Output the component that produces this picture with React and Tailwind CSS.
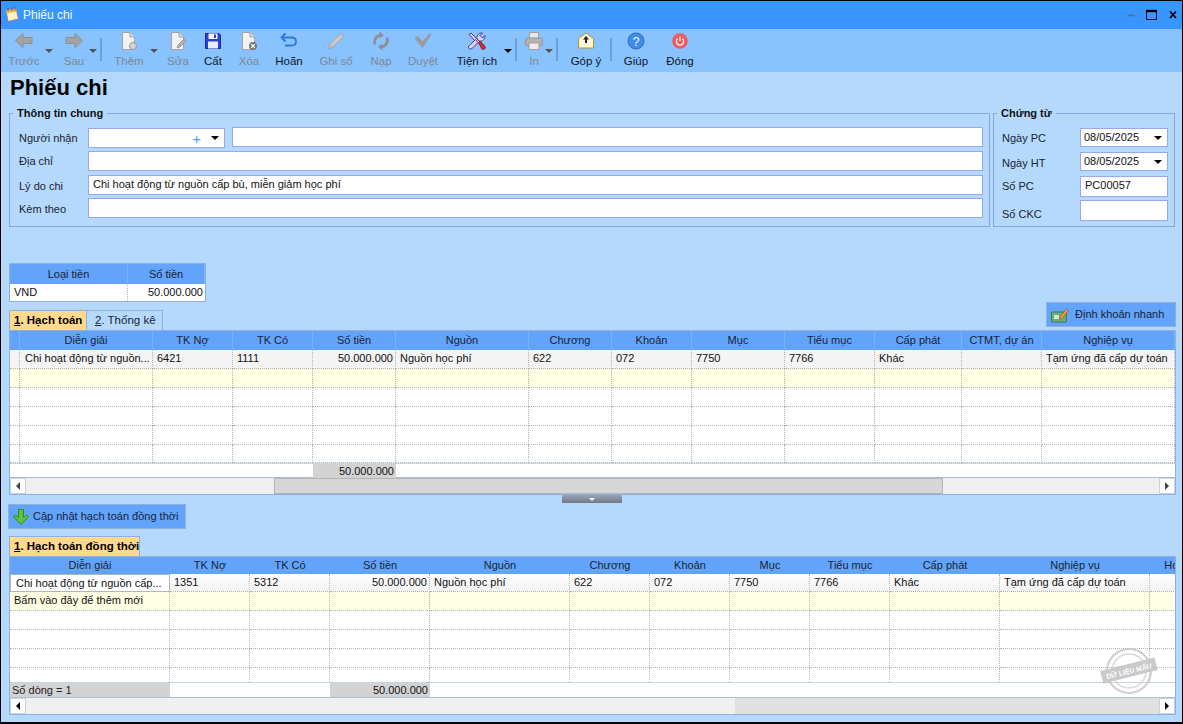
import React from 'react';

const Doc = ({ children }) => (
  <svg width="20" height="20" viewBox="0 0 20 20">
    <path d="M3.5 1.5H11L15.5 6V18.5H3.5Z" fill="#f2f2f2" stroke="#a3a3a3" />
    <path d="M11 1.5V6H15.5" fill="#d8d8d8" stroke="#a3a3a3" />
    {children}
  </svg>
);

const icons = {
  back: (
    <svg width="20" height="20" viewBox="0 0 20 20">
      <path d="M1.5 9.5L9 2.5V6.5H18V12.5H9V16.5Z" fill="#a3a3a3" stroke="#8e8e8e" />
    </svg>
  ),
  next: (
    <svg width="20" height="20" viewBox="0 0 20 20">
      <path d="M18.5 9.5L11 2.5V6.5H2V12.5H11V16.5Z" fill="#a3a3a3" stroke="#8e8e8e" />
    </svg>
  ),
  add: (
    <Doc>
      <circle cx="14" cy="15" r="3.5" fill="#d4d4d4" stroke="#9a9a9a" />
    </Doc>
  ),
  edit: (
    <Doc>
      <path d="M9 17L10 14L16 8L18 10L12 16Z" fill="#b0b0b0" stroke="#8f8f8f" strokeWidth="0.7" />
    </Doc>
  ),
  save: (
    <svg width="20" height="20" viewBox="0 0 20 20">
      <path d="M2.5 2.5H16L17.5 4V17.5H2.5Z" fill="#2f3fd8" stroke="#1c2a9c" />
      <rect x="5.5" y="2.5" width="9" height="5.5" fill="#f4f6ff" />
      <rect x="11" y="3.5" width="2" height="3.5" fill="#2f3fd8" />
      <rect x="5" y="10.5" width="10" height="7" fill="#e8ecff" />
    </svg>
  ),
  del: (
    <Doc>
      <circle cx="14" cy="15" r="4" fill="#777" />
      <path d="M12.2 13.2L15.8 16.8M15.8 13.2L12.2 16.8" stroke="#fff" strokeWidth="1.2" />
    </Doc>
  ),
  undo: (
    <svg width="20" height="20" viewBox="0 0 20 20" fill="none">
      <path d="M6.5 2.5L2.5 6.5L6.5 10.5" stroke="#2a78d8" strokeWidth="1.8" />
      <path d="M3 6.5H12.5C15.5 6.5 17 8.5 17 10.5C17 12.5 15.5 14.5 12.5 14.5H6" stroke="#2a78d8" strokeWidth="1.8" />
    </svg>
  ),
  pencil: (
    <svg width="20" height="20" viewBox="0 0 20 20">
      <path d="M2.5 18L4 13L14.5 2.5L17.5 5.5L7 16Z" fill="#c9c9c9" stroke="#a2a2a2" />
    </svg>
  ),
  reload: (
    <svg width="20" height="20" viewBox="0 0 20 20" fill="none">
      <path d="M4 13.5C2.5 9.5 4.5 5 9.5 4" stroke="#8f8f8f" strokeWidth="2.8" />
      <path d="M16 6.5C17.5 10.5 15.5 15 10.5 16" stroke="#8f8f8f" strokeWidth="2.8" />
      <path d="M8.5 0.5L13 4L8.5 7.5Z" fill="#8f8f8f" />
      <path d="M11.5 12.5L7 16L11.5 19.5Z" fill="#8f8f8f" />
    </svg>
  ),
  check: (
    <svg width="20" height="20" viewBox="0 0 20 20">
      <path d="M1.5 7L5 5L9.5 10.5L17 2L18.5 3.5L9.5 17Z" fill="#9a9a9a" />
    </svg>
  ),
  tools: (
    <svg width="20" height="20" viewBox="0 0 20 20">
      <path d="M2 3.5L4 2L12.5 10.5L10.5 12.5Z" fill="#d9d3ee" stroke="#4f3a8a" />
      <path d="M11.5 9.5L10 7.5C9.5 4.5 12 1.5 15.5 2L13 4.5L15.5 7L18 4.5C18.5 8 15.5 10.5 12.5 10Z" fill="#d9d3ee" stroke="#4f3a8a" />
      <path d="M8.5 8.5L3.5 13.5C1.5 15 1 16.5 2 17.5C3 18.5 4.5 18 6 16.5L11 11.5Z" fill="#d9d3ee" stroke="#4f3a8a" />
      <path d="M11.5 11.5L13 10L18 15.5C18.5 16.5 18.5 17 17.5 18C16.5 18.8 16 18.5 15 18Z" fill="#d83030" stroke="#8a1c1c" />
    </svg>
  ),
  print: (
    <svg width="20" height="20" viewBox="0 0 20 20">
      <rect x="5.5" y="1.5" width="9" height="6" fill="#e8e8e8" stroke="#a0a0a0" />
      <rect x="1.5" y="7" width="17" height="7.5" rx="1.5" fill="#b3b3b3" stroke="#969696" />
      <rect x="5" y="12" width="10" height="6.5" fill="#ececec" stroke="#a0a0a0" />
    </svg>
  ),
  mail: (
    <svg width="20" height="20" viewBox="0 0 20 20">
      <path d="M2.5 7.5L10 2L17.5 7.5V17H2.5Z" fill="#fff6d8" stroke="#b8902c" />
      <path d="M10 5L13 8.5H11V12H9V8.5H7Z" fill="#222" />
    </svg>
  ),
  help: (
    <svg width="20" height="20" viewBox="0 0 20 20">
      <circle cx="10" cy="10" r="8" fill="#3f8de8" stroke="#2a6cc4" />
      <text x="10" y="14.5" textAnchor="middle" fontSize="12" fill="#fff" fontFamily="Liberation Sans">?</text>
    </svg>
  ),
  power: (
    <svg width="20" height="20" viewBox="0 0 20 20" fill="none">
      <circle cx="10" cy="10" r="7.8" fill="#f05c5c" />
      <path d="M7.6 7.8A3.6 3.6 0 1 0 12.4 7.8" stroke="#fff" strokeWidth="1.2" />
      <path d="M10 5.8V10" stroke="#fff" strokeWidth="1.2" />
    </svg>
  ),
};

function ToolBtn({ label, icon, off, className }) {
  return (
    <div className={`flex flex-col items-center shrink-0 ${className}`}>
      <div className="h-[20px] flex items-center justify-center">{icons[icon]}</div>
      <div className={`mt-[3px] text-[11.5px] leading-[15px] whitespace-nowrap ${off ? 'text-[#7f8790]' : 'text-[#10161c]'}`}>{label}</div>
    </div>
  );
}

function Caret({ off, className }) {
  return (
    <div className={`w-[8px] shrink-0 self-start mt-[18px] flex justify-center ${className}`}>
      <div className={`w-0 h-0 border-x-[4px] border-x-transparent border-t-[4px] ${off ? 'border-t-[#555]' : 'border-t-black'}`} />
    </div>
  );
}

const Sep = ({ className }) => <div className={`w-[2px] h-[23px] self-start mt-[7px] bg-[#6f9ed6] shrink-0 ${className}`} />;

function Toolbar() {
  return (
    <div className="h-[43px] bg-[#88c2ff] flex items-start pl-[7px] pt-[2px]">
      <ToolBtn label="Trước" icon="back" off className="w-[32px]" />
      <Caret off className="ml-[5px]" />
      <ToolBtn label="Sau" icon="next" off className="w-[28px] ml-[7px]" />
      <Caret off className="ml-[1px]" />
      <Sep className="ml-[3px]" />
      <ToolBtn label="Thêm" icon="add" off className="w-[34px] ml-[10px]" />
      <Caret off className="ml-[4px]" />
      <ToolBtn label="Sửa" icon="edit" off className="w-[28px] ml-[6px]" />
      <ToolBtn label="Cất" icon="save" className="w-[28px] ml-[7px]" />
      <ToolBtn label="Xóa" icon="del" off className="w-[28px] ml-[8px]" />
      <ToolBtn label="Hoãn" icon="undo" className="w-[36px] ml-[8px]" />
      <ToolBtn label="Ghi sổ" icon="pencil" off className="w-[40px] ml-[9px]" />
      <ToolBtn label="Nạp" icon="reload" off className="w-[30px] ml-[10px]" />
      <ToolBtn label="Duyệt" icon="check" off className="w-[36px] ml-[9px]" />
      <ToolBtn label="Tiện ích" icon="tools" className="w-[44px] ml-[14px]" />
      <Caret className="ml-[5px]" />
      <Sep className="ml-[3px]" />
      <ToolBtn label="In" icon="print" off className="w-[20px] ml-[7px]" />
      <Caret off className="ml-[1px]" />
      <Sep className="ml-[3px]" />
      <ToolBtn label="Góp ý" icon="mail" className="w-[36px] ml-[10px]" />
      <Sep className="ml-[6px]" />
      <ToolBtn label="Giúp" icon="help" className="w-[30px] ml-[9px]" />
      <ToolBtn label="Đóng" icon="power" className="w-[34px] ml-[12px]" />
    </div>
  );
}

function Input({ value, className }) {
  return (
    <div className={`border border-[#98a8ea] bg-white px-[4px] text-[11px] leading-[17px] text-[#111] whitespace-nowrap overflow-hidden ${className}`}>
      {value}
    </div>
  );
}

function DateBox({ value, className }) {
  return (
    <div className={`h-[19px] flex items-center justify-between border border-[#98a8ea] bg-white pl-[3px] pr-[5px] text-[11px] text-[#111] ${className}`}>
      {value}
      <div className="w-0 h-0 border-x-[4px] border-x-transparent border-t-[4px] border-t-black" />
    </div>
  );
}

const Label = ({ children, className }) => (
  <div className={`text-[11px] leading-[15px] text-[#1a2430] whitespace-nowrap ${className}`}>{children}</div>
);

function Group({ title, className, children }) {
  return (
    <fieldset className={`border border-[#88a4d8] pb-0 h-[121px] ${className}`}>
      <legend className="ml-[3px] px-[4px] text-[11px] leading-[14px] font-bold text-[#111]">{title}</legend>
      {children}
    </fieldset>
  );
}

function InfoGroups() {
  return (
    <div className="flex">
      <Group title="Thông tin chung" className="w-[981px]">
        <div className="pt-[7px] pl-[9px] pr-[6px] flex flex-col">
          <div className="flex items-start h-[24px]">
            <Label className="w-[69px] mt-[4px]">Người nhận</Label>
            <div className="w-[137px] h-[20px] mt-[1px] flex items-center justify-between border border-[#98a8ea] bg-white pr-[5px]">
              <span className="ml-auto mr-[10px] text-[15px] leading-[15px] text-[#5aa0e0]">+</span>
              <div className="w-0 h-0 border-x-[4px] border-x-transparent border-t-[4px] border-t-black" />
            </div>
            <Input className="flex-1 h-[20px] ml-[7px]" />
          </div>
          <div className="flex items-start h-[24px]">
            <Label className="w-[69px] mt-[3px]">Địa chỉ</Label>
            <Input className="flex-1 h-[20px]" />
          </div>
          <div className="flex items-start h-[23px]">
            <Label className="w-[69px] mt-[4px]">Lý do chi</Label>
            <Input value="Chi hoạt động từ nguồn cấp bù, miễn giảm học phí" className="flex-1 h-[20px]" />
          </div>
          <div className="flex items-start">
            <Label className="w-[69px] mt-[4px]">Kèm theo</Label>
            <Input className="flex-1 h-[20px]" />
          </div>
        </div>
      </Group>
      <Group title="Chứng từ" className="w-[182px] ml-[3px]">
        <div className="pt-[8px] pl-[8px] flex flex-col">
          <div className="flex items-start h-[24px]">
            <Label className="w-[78px] mt-[3px]">Ngày PC</Label>
            <DateBox value="08/05/2025" className="w-[88px]" />
          </div>
          <div className="flex items-start h-[24px]">
            <Label className="w-[78px] mt-[4px]">Ngày HT</Label>
            <DateBox value="08/05/2025" className="w-[88px]" />
          </div>
          <div className="flex items-start h-[24px]">
            <Label className="w-[78px] mt-[3px]">Số PC</Label>
            <Input value="PC00057" className="w-[88px] h-[21px]" />
          </div>
          <div className="flex items-start">
            <Label className="w-[78px] mt-[7px]">Số CKC</Label>
            <Input className="w-[88px] h-[21px]" />
          </div>
        </div>
      </Group>
    </div>
  );
}

const Dotted = 'border-r border-b border-dotted border-[#b4b4b4]';

function Cell({ value, right, className = '' }) {
  return (
    <div className={`pl-[4px] pr-[2px] text-[11px] leading-[17px] text-[#111] whitespace-nowrap overflow-hidden ${right ? 'text-right' : ''} ${Dotted} ${className}`}>
      {value}
    </div>
  );
}

function HeadCell({ value, className = '' }) {
  return (
    <div className={`text-center text-[11px] text-[#1a2430] whitespace-nowrap border-r border-[#7fb2f8] ${className}`}>{value}</div>
  );
}

function CurrencyTable() {
  return (
    <div className="w-[197px] border border-[#8fb0de] bg-white">
      <div className="grid grid-cols-[118px_77px] h-[20px] bg-[#62a3fb] leading-[20px]">
        <HeadCell value="Loại tiền" />
        <HeadCell value="Số tiền" />
      </div>
      <div className="grid grid-cols-[118px_77px] h-[17px]">
        <Cell value="VND" className="border-b-0" />
        <Cell value="50.000.000" right className="border-b-0 border-r-0 pr-0" />
      </div>
    </div>
  );
}

const col1 = 'grid grid-cols-[10px_133px_80px_80px_83px_133px_83px_80px_93px_90px_87px_80px_133px]';
const col2 = 'grid grid-cols-[160px_80px_80px_100px_140px_80px_80px_80px_80px_110px_150px_50px]';

const head1 = ['', 'Diễn giải', 'TK Nợ', 'TK Có', 'Số tiền', 'Nguồn', 'Chương', 'Khoản', 'Mục', 'Tiểu mục', 'Cấp phát', 'CTMT, dự án', 'Nghiệp vụ'];
const row1 = ['', 'Chi hoạt động từ nguồn...', '6421', '1111', '50.000.000', 'Nguồn học phí', '622', '072', '7750', '7766', 'Khác', '', 'Tạm ứng đã cấp dự toán'];
const head2 = ['Diễn giải', 'TK Nợ', 'TK Có', 'Số tiền', 'Nguồn', 'Chương', 'Khoản', 'Mục', 'Tiểu mục', 'Cấp phát', 'Nghiệp vụ', 'Hợp'];
const row2 = ['Chi hoạt động từ nguồn cấp...', '1351', '5312', '50.000.000', 'Nguồn học phí', '622', '072', '7750', '7766', 'Khác', 'Tạm ứng đã cấp dự toán', ''];

function ScrollBar({ children }) {
  return (
    <div className="h-[17px] flex bg-[#efefef] border-t border-[#aebfd4]">
      <div className="w-[16px] bg-white border border-[#c6d2e0] flex items-center justify-center shrink-0">
        <div className="w-0 h-0 border-y-[4px] border-y-transparent border-r-[4px] border-r-[#444]" />
      </div>
      <div className="flex-1 flex">{children}</div>
      <div className="w-[16px] bg-white border border-[#c6d2e0] flex items-center justify-center shrink-0">
        <div className="w-0 h-0 border-y-[4px] border-y-transparent border-l-[4px] border-l-[#444]" />
      </div>
    </div>
  );
}

function Tab({ num, label, active, className = '' }) {
  return (
    <div className={`h-[20px] flex items-center text-[11.5px] border border-b-0 border-[#8fb0de] whitespace-nowrap ${active ? 'bg-[#ffd98c] font-bold text-black' : 'bg-[#b5d9fd] text-[#1a2430]'} ${className}`}>
      <span className="underline">{num}</span>. {label}
    </div>
  );
}

function GridOne() {
  const blanks = [19, 19, 19, 19, 18];
  return (
    <div className="border border-[#8fb0de] bg-white overflow-hidden">
      <div className={`${col1} h-[19px] leading-[19px] bg-[#62a3fb]`}>
        {head1.map((h, i) => <HeadCell key={i} value={h} />)}
      </div>
      <div className={`${col1} h-[19px] bg-[#f4f4f4]`}>
        {row1.map((v, i) => <Cell key={i} value={v} right={i === 4} className={i === 1 ? 'pl-[5px]' : ''} />)}
      </div>
      {blanks.map((h, r) => (
        <div key={r} className={`${col1} ${r === 0 ? 'h-[19px] bg-[#ffffe4]' : r === 4 ? 'h-[18px] bg-white' : 'h-[19px] bg-white'}`}>
          {head1.map((_, i) => <Cell key={i} />)}
        </div>
      ))}
      <div className={`${col1} h-[14px] bg-white border-t border-[#c4d4e4]`}>
        <div className="col-span-4" />
        <div className="bg-[#d3d3d3] text-right text-[11px] leading-[14px] pr-[2px] text-[#111]">50.000.000</div>
      </div>
      <ScrollBar>
        <div className="w-[248px]" />
        <div className="w-[669px] bg-[#d6d6d6] border border-[#b4b4b4]" />
      </ScrollBar>
    </div>
  );
}

function GridTwo() {
  return (
    <div className="relative border border-[#8fb0de] bg-white overflow-hidden">
      <div className={`${col2} h-[17px] leading-[17px] bg-[#62a3fb]`}>
        {head2.map((h, i) => <HeadCell key={i} value={h} className="border-r-0" />)}
      </div>
      <div className={`${col2} h-[18px] bg-gradient-to-b from-white to-[#f2f2f2]`}>
        {row2.map((v, i) => (
          <Cell key={i} value={v} right={i === 3} className={i === 0 ? 'bg-white border border-solid border-[#a8a8a8] pl-[5px]' : ''} />
        ))}
      </div>
      <div className={`${col2} h-[19px] bg-[#ffffe4]`}>
        <Cell value="Bấm vào đây để thêm mới" className="pl-[2px]" />
        {head2.slice(1).map((_, i) => <Cell key={i} />)}
      </div>
      <div className={`${col2} h-[19px]`}>{head2.map((_, i) => <Cell key={i} />)}</div>
      <div className={`${col2} h-[19px]`}>{head2.map((_, i) => <Cell key={i} />)}</div>
      <div className={`${col2} h-[19px]`}>{head2.map((_, i) => <Cell key={i} />)}</div>
      <div className={`${col2} h-[14px]`}>{head2.map((_, i) => <Cell key={i} className="border-b-0" />)}</div>
      <div className={`${col2} h-[15px] border-t border-[#c4d4e4]`}>
        <div className="bg-[#d3d3d3] text-[11px] leading-[14px] pl-[2px] text-[#222]">Số dòng = 1</div>
        <div className="col-span-2" />
        <div className="bg-[#d3d3d3] text-right text-[11px] leading-[14px] pr-[2px] text-[#111]">50.000.000</div>
      </div>
      <div className="h-[17px] flex border-t border-[#aebfd4] bg-[#e0e0e0]">
        <div className="w-[16px] bg-white border border-[#c6d2e0] flex items-center justify-center shrink-0">
          <div className="w-0 h-0 border-y-[4px] border-y-transparent border-r-[4px] border-r-black" />
        </div>
        <div className="w-[709px] bg-[#f0f0f0]" />
        <div className="flex-1" />
        <div className="w-[16px] bg-white border border-[#c6d2e0] flex items-center justify-center shrink-0">
          <div className="w-0 h-0 border-y-[4px] border-y-transparent border-l-[4px] border-l-black" />
        </div>
      </div>
      {/* con dấu dữ liệu mẫu */}
      <svg className="absolute right-[16px] bottom-[18px] opacity-80" width="60" height="50" viewBox="0 0 60 50">
        <circle cx="30" cy="25" r="22" fill="none" stroke="#c4c4c4" strokeWidth="2" />
        <circle cx="30" cy="25" r="17" fill="none" stroke="#d0d0d0" strokeWidth="1.5" />
        <g transform="rotate(-14 30 25)">
          <rect x="2" y="18" width="56" height="13" fill="#bdbdbd" />
          <text x="30" y="27.5" textAnchor="middle" fontSize="7" fontWeight="700" fill="#fff" fontFamily="Liberation Sans">DỮ LIỆU MẪU</text>
        </g>
      </svg>
    </div>
  );
}

export default function App() {
  return (
    <div className="w-[1183px] h-[724px] overflow-hidden flex flex-col bg-[#b5d9fd] border border-b-2 border-black font-['Liberation_Sans',sans-serif]">
      {/* Title bar */}
      <div className="h-[28px] bg-[#3a96ff] flex items-center shrink-0 pl-[3px]">
        <svg width="16" height="16" viewBox="0 0 16 16">
          <path d="M2 3.5L12 1.5L14.5 12L4 14.5Z" fill="#fff3c0" stroke="#8a78c0" />
          <path d="M2 3.5L12 1.5L12.7 4.5L2.7 6.5Z" fill="#f0c040" />
          <path d="M4 1V4.5M8 0.5V4M11 0V3.5" stroke="#6a4fa0" />
        </svg>
        <span className="ml-[3px] text-[12px] text-[#eef6ff]">Phiếu chi</span>
        <div className="ml-auto flex items-center pr-[4px]">
          <svg width="60" height="14" viewBox="0 0 60 14">
            <path d="M10 7.5H17" stroke="#5c6f88" strokeWidth="1.6" />
            <path d="M28.5 2.5H38.5V11.5H28.5Z" fill="none" stroke="#000" />
            <path d="M28 3H39" stroke="#000" strokeWidth="2.4" />
            <path d="M52 3.5L58 10M58 3.5L52 10" stroke="#000" strokeWidth="1.8" />
          </svg>
        </div>
      </div>
      <Toolbar />

      {/* Body */}
      <div className="flex-1 flex flex-col pl-[8px] pr-[6px]">
        <h1 className="h-[34px] pl-[1px] pt-[3px] text-[22px] leading-[26px] font-bold text-black">Phiếu chi</h1>
        <InfoGroups />
        <div className="mt-[36px]">
          <CurrencyTable />
        </div>
        <div className="h-[28px] flex items-start justify-between">
          <div className="flex mt-[8px]">
            <Tab num="1" label="Hạch toán" active className="w-[78px] pl-[4px]" />
            <Tab num="2" label="Thống kê" className="w-[76px] pl-[8px] border-l-0" />
          </div>
          <div className="w-[130px] h-[25px] bg-[#62a3fb] flex items-center border border-[#8fb0de] pl-[4px]">
            <svg className="shrink-0" width="18" height="16" viewBox="0 0 18 16">
              <rect x="0.5" y="5" width="15" height="10" rx="1" fill="#6cae7a" stroke="#3a7a4c" />
              <rect x="3" y="8" width="5" height="4" fill="#cfe8d2" />
              <path d="M9 10L15.5 2L17.5 3.5L11 11.5L8.5 12Z" fill="#f0a040" stroke="#a04020" strokeWidth="0.6" />
            </svg>
            <span className="ml-[6px] text-[11px] text-[#1a2430] whitespace-nowrap">Định khoản nhanh</span>
          </div>
        </div>
        <GridOne />
        <div className="h-[9px] shrink-0">
          <div className="ml-[553px] w-[60px] h-[8px] bg-gradient-to-b from-[#9aa4b4] to-[#6f7a8c] flex items-center justify-center">
            <div className="w-0 h-0 border-x-[3px] border-x-transparent border-t-[3px] border-t-white" />
          </div>
        </div>
        <div className="w-[178px] h-[25px] -ml-[1px] bg-[#62a3fb] flex items-center border border-[#8fb0de] pl-[3px]">
          <svg className="shrink-0" width="18" height="18" viewBox="0 0 18 18">
            <path d="M9 16.5L1.5 8.5L3.5 7L6.5 9.5V1.5H11.5V9.5L14.5 7L16.5 8.5Z" fill="#5cc43c" stroke="#2e8a1c" />
          </svg>
          <span className="ml-[3px] text-[11px] text-[#1a2430] whitespace-nowrap">Cập nhật hạch toán đồng thời</span>
        </div>
        <div className="flex mt-[7px]">
          <Tab num="1" label="Hạch toán đồng thời" active className="w-[131px] pl-[4px]" />
        </div>
        <GridTwo />
      </div>
    </div>
  );
}
